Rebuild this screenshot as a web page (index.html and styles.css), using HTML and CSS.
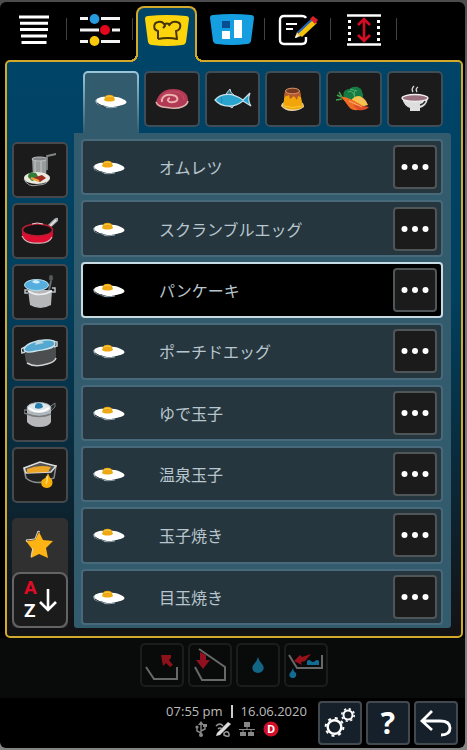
FILE: index.html
```html
<!DOCTYPE html>
<html lang="ja">
<head>
<meta charset="utf-8">
<meta name="viewport" content="width=device-width, initial-scale=1">
<title>玉子料理</title>
<link rel="stylesheet" href="styles.css">
</head>
<body>
<svg class="defs" aria-hidden="true">
  <symbol id="egg" viewBox="0 0 32 16">
    <path d="M1 9C0 5 7 3 13 4c6-1 14 0 18 4 2 3-3 4-8 5-5 2-12 1-15-1-4 0-7-1-7-3z" fill="#fff"/>
    <path d="M1 7c-1 3 3 5 7 6 3 2 9 2 14 1" fill="none" stroke="#8fa3ad" stroke-width="1.200"/>
    <path d="M2 10l5 3M7 13l4 2" stroke="#17252d" stroke-width=".8"/>
    <path d="M10 4c1-3 8-3 9 0l1 3c-2 2-9 2-11 0z" fill="#eda913"/>
    <path d="M11 4c2-1 5-1 7 0" stroke="#f9cf4f" fill="none"/>
  </symbol>
  <symbol id="dots" viewBox="0 0 28 8"><g fill="#fff"><circle cx="3.500" cy="4" r="3"/><circle cx="14" cy="4" r="3"/><circle cx="24.500" cy="4" r="3"/></g></symbol>
</svg>
<main class="device">
  <nav class="modes" aria-label="モード">
    <button class="mode" aria-label="リスト"><svg width="32" height="32" viewBox="0 0 32 32"><path d="M1 3h30M2 9.300h28M2 15.600h28M3 22h26M3.500 28.500h25" stroke="#fff" stroke-width="3"/></svg></button>
    <button class="mode" aria-label="設定値"><svg width="42" height="32" viewBox="0 0 42 32"><path d="M1 4.500h8M22 4.500h19M1 16h19M33 16h8M1 27.500h8M22 27.500h19" stroke="#f4f4f4" stroke-width="3"/><circle cx="15.500" cy="5" r="4.900" fill="#259be0"/><circle cx="26" cy="16" r="5" fill="#e3061c"/><circle cx="15.500" cy="27" r="4.900" fill="#f8c90b"/></svg></button>
    <button class="mode active" aria-label="調理" aria-pressed="true"><svg width="46" height="34" viewBox="0 0 46 34"><path d="M4 2Q23 0 42 2q3 0 3 3l-3 23q-1 3-4 3-15 2-30 0-3 0-4-3L1 5q0-3 3-3z" fill="#fbd40c"/><path d="M14 25v-8c-5-1-5-8 0-9 4-1 6 1 7 4l-2 2M25 12c1-3 4-5 8-4 5 1 4 8-1 9l1 8q-9-2-19 0M21 10q2-1 4 0" fill="none" stroke="#44330b" stroke-width="2" stroke-linejoin="round"/></svg></button>
    <button class="mode" aria-label="プログラム"><svg width="46" height="34" viewBox="0 0 46 34"><path d="M4 2Q23 0 42 2q3 0 3 3l-3 23q-1 3-4 3-15 2-30 0-3 0-4-3L1 5q0-3 3-3z" fill="#159fe1"/><path d="M13 8h8v7h-8z" fill="#064e91"/><path d="M13 18h8v8h-8zM25 7h8v18h-8z" fill="#fff"/></svg></button>
    <button class="mode" aria-label="編集"><svg width="40" height="32" viewBox="0 0 40 32"><path d="M28 23v3q0 4-4 4H6q-4 0-4-4V6q0-4 4-4h18q3 0 4 2" fill="none" stroke="#fff" stroke-width="2.400"/><path d="M8 10h11M8 15h7" stroke="#fff" stroke-width="2"/><path d="M17 24l2-6 4 4z" fill="#f6dba4"/><path d="M19 18L34 4l2 2-15 14z" fill="#2464b5"/><path d="M20 20L35 6l4 3-15 14z" fill="#f4c20d"/><path d="M32 5l3-3 5 4-3 4z" fill="#dc2027"/><path d="M17 24l1-3 2 2z" fill="#fff"/></svg></button>
    <button class="mode" aria-label="ラック"><svg width="34" height="32" viewBox="0 0 34 32"><path d="M0 1.500h34M0 30.500h34" stroke="#fff" stroke-width="2.600"/><path d="M2.500 6v21M31.500 6v21" stroke="#fff" stroke-width="3" stroke-dasharray="3 3"/><path d="M17 5v22M11 11l6-6 6 6M11 21l6 6 6-6" fill="none" stroke="#d50d22" stroke-width="2.600"/></svg></button>
  </nav>

  <section class="panel">
    <nav class="cats" aria-label="食材">
      <button class="tile cat current" aria-label="玉子料理" aria-pressed="true"><svg class="egg"><use href="#egg"/></svg></button>
      <button class="tile cat" aria-label="肉"><svg width="34" height="22" viewBox="0 0 34 22"><path d="M1 14C3 7 8 1 18 1c9 0 15 4 15 11 0 6-8 9-17 8C7 21 0 18 1 14z" fill="#b23a55"/><path d="M1 14c2 6 10 5 15 6 9 1 16-2 17-7" fill="none" stroke="#d9b2aa" stroke-width="1.500"/><path d="M7 14C6 8 12 6 17 7c7 1 7 7 1 7-5 1-7-3-3-4" fill="none" stroke="#edb0ae" stroke-width="2"/><path d="M5 12C8 5 13 3 20 4c6 0 9 4 9 8" fill="none" stroke="#c45267"/></svg></button>
      <button class="tile cat" aria-label="魚"><svg width="38" height="22" viewBox="0 0 38 22"><path d="M12 6q3-4 4-5 0 4 4 6M14 17l4 3 2-3" fill="#28738e" stroke="#d2dfe3"/><path d="M1 12C7 5 18 4 29 12l7-7q-3 7 1 13l-8-5C20 20 8 20 1 12z" fill="#28a4ce" stroke="#c7e0e7" stroke-width="1.200"/><path d="M7 9q2 3 0 6" fill="none" stroke="#1b87b0"/></svg></button>
      <button class="tile cat" aria-label="デザート"><svg width="26" height="26" viewBox="0 0 26 26"><path d="M1 20q1-4 4-4h16q3 1 3 5-5 4-12 4T1 20z" fill="#e7d3a7"/><path d="M5 6q7-5 15 0l3 15q-9 5-20 0z" fill="#f1a50a"/><path d="M5 5q7-5 15 0l1 6-3-1-1 4-3-4-4 3-1-4-5 2z" fill="#b55a2c"/><ellipse cx="12.500" cy="5" rx="7" ry="2.800" fill="#783923" stroke="#dd9467"/><path d="M4 20q8 3 18 0" fill="none" stroke="#ffcf31"/></svg></button>
      <button class="tile cat" aria-label="野菜"><svg width="36" height="26" viewBox="0 0 36 26"><path d="M8 12C6 5 10 3 14 3c3-4 12-2 12 3 4 6-3 9-8 9z" fill="#167b42"/><path d="M12 6q5-3 7 6M20 4q-3 2-1 8M14 3l7 2" stroke="#4eb369" fill="none"/><path d="M16 13q7-7 14 2l2 4q-9 3-16-1z" fill="#f4c34c"/><path d="M4 10q13 2 25 12-11 5-16-1Q9 15 4 10z" fill="#ef6d23"/><path d="M5 11l-4-2m5 4l-6 1m6-3l-3-5" stroke="#43a04b" stroke-width="1.500"/><path d="M17 19q8 0 16 2-4 4-11 3z" fill="#de4d27"/><path d="M13 15l13 6M22 13q5 0 9 5" stroke="#ffb07b" fill="none"/></svg></button>
      <button class="tile cat" aria-label="スープ"><svg width="28" height="28" viewBox="0 0 28 28"><path d="M12 7q-2-3 1-6m3 6q-2-3 1-5" stroke="#d5d5d5" stroke-width="1.400" fill="none"/><path d="M1 13q2 8 8 10v3h10v-3q7-2 8-10z" fill="#dedede"/><ellipse cx="14" cy="13" rx="13" ry="3.500" fill="#99727f" stroke="#eee" stroke-width="1.300"/><path d="M19 20q4-1 5-4" stroke="#333" stroke-width="1.500" fill="none"/></svg></button>
    </nav>

    <aside class="side">
      <button class="tile" aria-label="付け合わせ"><svg width="34" height="34" viewBox="0 0 34 34"><path d="M9 6h15l-1 17H10z" fill="#999c9c"/><path d="M12 7v13M18 7v14" stroke="#c4c7c6"/><ellipse cx="16.500" cy="6" rx="7.500" ry="2" fill="#828686" stroke="#c0c3c4"/><path d="M24 17V3l9-2" fill="none" stroke="#818686" stroke-width="1.800"/><ellipse cx="14" cy="25" rx="13" ry="6" fill="#e9e9df"/><path d="M1 26q4 9 14 6 8 0 11-5" fill="none" stroke="#a6aaa8"/><path d="M5 24q0-6 8-4l3 5-7 3z" fill="#327d38"/><path d="M10 25l9-3 4 3-6 4z" fill="#9e2b20"/><path d="M8 25l8 3" stroke="#f0a33b" stroke-width="2"/></svg></button>
      <button class="tile" aria-label="フライパン"><svg width="38" height="28" viewBox="0 0 38 28"><path d="M25 10l7-7q3-3 5-2v3l-10 9z" fill="#a8abad"/><path d="M28 10l7-7" stroke="#eee" stroke-width="1.200"/><path d="M1 14q-1 11 15 12 14 0 16-8V13z" fill="#e00d31"/><path d="M1 19q4 8 15 7 12 1 15-6" stroke="#d9b6b9" stroke-width="1.200" fill="none"/><ellipse cx="16.500" cy="13" rx="15" ry="6" fill="#151012" stroke="#b41e32" stroke-width="1.700"/><path d="M11 7q5-2 11 0" stroke="#f2cfd2" fill="none"/></svg></button>
      <button class="tile" aria-label="鍋"><svg width="32" height="36" viewBox="0 0 32 36"><path d="M4 16h24l-1 15q-11 6-21 0z" fill="#b5b7b9"/><path d="M4 17q11 7 24 0" fill="none" stroke="#eee" stroke-width="1.500"/><path d="M4 19H1v-3h3m24 2h3v-4h-3" fill="none" stroke="#bfc2c5" stroke-width="1.500"/><path d="M25 16l2-9" fill="none" stroke="#6b6f72" stroke-width="2"/><ellipse cx="27" cy="4" rx="2" ry="3" fill="#55595b"/><ellipse cx="12.500" cy="11" rx="12" ry="5.500" fill="#55aede" stroke="#b6e1f0"/><path d="M8 8q3-4 8 0-2 3-8 0z" fill="#d1eefb"/></svg></button>
      <button class="tile" aria-label="両手鍋"><svg width="38" height="28" viewBox="0 0 38 28"><path d="M3 11l2 12q5 4 18 3 10-1 12-6V7z" fill="#4b4d4e"/><path d="M4 13L1 14l-1-4 4-2M33 8l3-1V3l-4-1M6 24q8 5 20 1 8-2 9-6" fill="none" stroke="#ced2d4" stroke-width="1.500"/><path d="M3 10C5 5 14 2 24 1q10-1 10 4c-1 5-12 6-19 7-8 2-12 1-12-2z" fill="#55a9d1" stroke="#c8e6ef" stroke-width="1.300"/><path d="M15 3q2-4 6-1l2 2-9 2z" fill="#bdd6df"/></svg></button>
      <button class="tile" aria-label="片手鍋"><svg width="32" height="28" viewBox="0 0 32 28"><path d="M24 8l7-5v4l-7 7" fill="#292a2a" stroke="#777"/><path d="M3 9v13q4 5 12 5 10 0 12-5V9z" fill="#b7b8b9"/><path d="M3 14L0 13v-3h3m0 4q12 5 24 0" fill="none" stroke="#777b7d" stroke-width="1.400"/><ellipse cx="15" cy="8" rx="12" ry="5.500" fill="#e1e7e9" stroke="#9caeb7"/><path d="M5 8q9 7 20 0" fill="none" stroke="#fff" stroke-width="1.500"/><path d="M11 6q1-5 7-2l1 3q-3 3-8 1z" fill="#287daf"/></svg></button>
      <button class="tile" aria-label="揚げ物"><svg width="34" height="28" viewBox="0 0 34 28"><path d="M1 8l2 9q7 6 17 4l11-4 2-12z" fill="#202123" stroke="#8b8e90" stroke-width="1.500"/><path d="M1 7L17 1l16 4-5 6-25 1z" fill="#555" stroke="#ddd" stroke-width="1.500"/><path d="M4 8q12-5 24-2l-3 5-21 1z" fill="#eca526"/><path d="M25 12q1 4 4 7c2 5-2 8-5 8-5 0-7-4-5-8 4-2 5-4 6-7z" fill="#f7af0b"/><path d="M24 15q1 4-1 8" stroke="#ffe079" stroke-width="1.400" fill="none"/></svg></button>
      <div class="sorting">
        <button class="tile star" aria-label="お気に入り"><svg width="30" height="30" viewBox="0 0 30 30"><path d="M14 2l4 8 10 1-7 7 2 10-9-4-8 4 1-9-6-8 9-1z" fill="#fdb313"/><path d="M2 12l-1-2 9-1 3-8 2 1M6 27l2-9" fill="none" stroke="#e8d6ce"/></svg></button>
        <button class="tile sort" aria-label="AからZ"><svg width="36" height="52" viewBox="0 0 36 52"><text x="2" y="20" fill="#e20b26" class="letter">A</text><text x="2" y="43" fill="#fff" class="letter">Z</text><path d="M26 15v20M18 28l8 8 8-8" fill="none" stroke="#fff" stroke-width="2.600"/></svg></button>
      </div>
    </aside>

    <ul class="list">
      <li class="row"><button class="pick"><svg class="egg"><use href="#egg"/></svg><span>オムレツ</span></button><button class="tile more" aria-label="その他"><svg class="dots"><use href="#dots"/></svg></button></li>
      <li class="row"><button class="pick"><svg class="egg"><use href="#egg"/></svg><span>スクランブルエッグ</span></button><button class="tile more" aria-label="その他"><svg class="dots"><use href="#dots"/></svg></button></li>
      <li class="row selected"><button class="pick"><svg class="egg"><use href="#egg"/></svg><span>パンケーキ</span></button><button class="tile more" aria-label="その他"><svg class="dots"><use href="#dots"/></svg></button></li>
      <li class="row"><button class="pick"><svg class="egg"><use href="#egg"/></svg><span>ポーチドエッグ</span></button><button class="tile more" aria-label="その他"><svg class="dots"><use href="#dots"/></svg></button></li>
      <li class="row"><button class="pick"><svg class="egg"><use href="#egg"/></svg><span>ゆで玉子</span></button><button class="tile more" aria-label="その他"><svg class="dots"><use href="#dots"/></svg></button></li>
      <li class="row"><button class="pick"><svg class="egg"><use href="#egg"/></svg><span>温泉玉子</span></button><button class="tile more" aria-label="その他"><svg class="dots"><use href="#dots"/></svg></button></li>
      <li class="row"><button class="pick"><svg class="egg"><use href="#egg"/></svg><span>玉子焼き</span></button><button class="tile more" aria-label="その他"><svg class="dots"><use href="#dots"/></svg></button></li>
      <li class="row"><button class="pick"><svg class="egg"><use href="#egg"/></svg><span>目玉焼き</span></button><button class="tile more" aria-label="その他"><svg class="dots"><use href="#dots"/></svg></button></li>
    </ul>
  </section>

  <div class="actions">
    <button class="tile action" aria-label="パンを上げる"><svg width="36" height="32" viewBox="0 0 36 32"><path d="M2 18l8 12h23V18" fill="none" stroke="#686868" stroke-width="2"/><path d="M17 6h10v3l-2 2 4 5-3 2-4-4-3 3z" fill="#8d1118"/></svg></button>
    <button class="tile action" aria-label="ふたを閉める"><svg width="36" height="36" viewBox="0 0 36 36"><path d="M3 20l7 13h23V20L7 2" fill="none" stroke="#686868" stroke-width="2"/><path d="M8 5l6 3v5h4l-7 9-7-9h4z" fill="#901020"/></svg></button>
    <button class="tile action" aria-label="給水"><svg width="14" height="18" viewBox="0 0 14 18"><path d="M7 1q1 4 4 7c4 5 0 9-4 9s-8-4-4-9q3-3 4-7z" fill="#126585"/></svg></button>
    <button class="tile action" aria-label="排水"><svg width="36" height="28" viewBox="0 0 36 28"><path d="M1 4l8 13h25V4" fill="none" stroke="#686868" stroke-width="2"/><path d="M6 10l6-6 2 2 9-3-6 7-4 1 1 3z" fill="#99121b"/><path d="M19 10q2-2 4 0t4 0 4 0v4H19z" fill="#126b91"/><path d="M5 17q0 3 3 5c1 3-1 5-3 5s-5-2-3-5q2-2 3-5z" fill="#126b91"/></svg></button>
  </div>

  <footer class="foot">
    <div class="status">
      <p class="clock"><time>07:55 pm</time><i class="bar"></i><time datetime="2020-06-16">16.06.2020</time></p>
      <div class="signals">
        <svg width="12" height="16" viewBox="0 0 12 16"><path d="M6 15V3M6 12L2 10V6m4 4l4-2V4" fill="none" stroke="#888" stroke-width="1.400"/><path d="M3 4l3-4 3 4zM8 3h4v3H8z" fill="#888"/><circle cx="2" cy="6" r="1.600" fill="#888"/><circle cx="6" cy="14" r="2" fill="#888"/></svg>
        <svg width="16" height="16" viewBox="0 0 16 16"><path d="M2 12L13 1l3 2L5 14l-4 1z" fill="#ddd"/><path d="M1 5q4-4 7 0M3 8q2-2 4 0M9 12q4-3 5 1t-5 1z" fill="none" stroke="#999" stroke-width="1.500"/></svg>
        <svg width="16" height="16" viewBox="0 0 16 16"><path d="M5 1h6v5H5zM1 11h6v4H1zM9 11h6v4H9z" fill="#888"/><path d="M8 6v3M0 8.500h16M4 8v4M12 8v4" stroke="#888"/></svg>
        <svg width="16" height="16" viewBox="0 0 16 16"><circle cx="8" cy="8" r="7.500" fill="#d20f2b"/><text x="8" y="12" text-anchor="middle" class="badge">D</text></svg>
      </div>
    </div>
    <div class="tools">
      <button class="tile tool" aria-label="設定"><svg width="32" height="32" viewBox="0 0 32 32"><g fill="none" stroke="#fff"><circle cx="10.500" cy="20" r="6.800" stroke-width="2.400"/><circle cx="10.500" cy="20" r="8.900" stroke-width="2" stroke-dasharray="3 3.990"/><circle cx="24" cy="8" r="4.500" stroke-width="2"/><circle cx="24" cy="8" r="6.200" stroke-width="1.600" stroke-dasharray="2.200 2.670"/></g></svg></button>
      <button class="tile tool help" aria-label="ヘルプ">?</button>
      <button class="tile tool" aria-label="戻る"><svg width="32" height="28" viewBox="0 0 32 28"><path d="M12 2L2 12l10 9M3 12h17q10 0 10 7 0 7-9 7" fill="none" stroke="#fff" stroke-width="2.800"/></svg></button>
    </div>
  </footer>
</main>
</body>
</html>
```
FILE: styles.css
```css
* { box-sizing: border-box; }

:root {
  --gold: #d3a92c;
  --teal: #004468;
  --steel: #335b6e;
  --ink: #1b1b1c;
}

body {
  margin: 0;
  padding: 2px 2px 2px 0;
  background: linear-gradient(#4c4c4c, #6e6e6e 20%, #858585);
  font-family: "Open Sans", "Noto Sans CJK JP", sans-serif;
  color: #b9c6cd;
}

button {
  margin: 0;
  padding: 0;
  border: 0;
  background: none;
  color: inherit;
  font: inherit;
  cursor: pointer;
}

svg { display: block; flex: none; }
.defs { position: absolute; width: 0; height: 0; }
.egg { width: 32px; height: 16px; }
.dots { width: 28px; height: 8px; }

.device {
  display: flex;
  flex-direction: column;
  min-height: calc(100vh - 4px);
  background: #000;
  border-radius: 6px;
}

/* Mode bar */
.modes {
  display: grid;
  grid-template-columns: repeat(6, minmax(0, 66px)) 1fr;
  padding: 4px 0 0 1px;
}

.mode {
  position: relative;
  display: flex;
  align-items: center;
  justify-content: center;
  height: 54px;
  padding-bottom: 6px;
}

.mode:not(.active)::after {
  content: "";
  position: absolute;
  right: 0;
  top: 12px;
  width: 1px;
  height: 22px;
  background: #424242;
}

.mode.active {
  z-index: 1;
  height: 56px;
  margin: 0 2px -2px 3px;
  padding-bottom: 8px;
  border: 2px solid var(--gold);
  border-bottom: 0;
  border-radius: 8px 8px 0 0;
  background: var(--teal);
}

.mode.active::before,
.mode.active::after {
  content: "";
  position: absolute;
  bottom: 0;
  width: 8px;
  height: 8px;
}

.mode.active::before {
  right: 100%;
  background: radial-gradient(circle at 0 0, #000 6px, var(--gold) 6px 8px, var(--teal) 8px);
}

.mode.active::after {
  left: 100%;
  background: radial-gradient(circle at 100% 0, #000 6px, var(--gold) 6px 8px, var(--teal) 8px);
}

/* Main panel */
.panel {
  flex: 1;
  display: grid;
  grid-template-columns: 56px minmax(0, 1fr);
  grid-template-rows: auto 1fr;
  column-gap: 6px;
  margin: 0 2px 0 5px;
  padding: 9px 10px 8px 5px;
  border: 2px solid var(--gold);
  border-radius: 5px;
  background: linear-gradient(var(--teal) 0%, #00405f 40%, #0a2a3b 70%, #131316 98%);
}

.tile {
  display: flex;
  align-items: center;
  justify-content: center;
  height: 56px;
  border: 2px solid #45494c;
  border-radius: 5px;
  background: var(--ink);
}

.cats {
  grid-column: 2;
  display: grid;
  grid-template-columns: repeat(6, minmax(0, 1fr));
  gap: 5px;
  padding: 0 8px 6px 9px;
}

.cat { border-color: #3d4e59; }

.cat.current {
  height: 62px;
  margin-bottom: -6px;
  padding-bottom: 4px;
  border: 2px solid transparent;
  border-bottom: 0;
  border-radius: 5px 5px 0 0;
  background:
    linear-gradient(var(--steel), var(--steel)) padding-box,
    linear-gradient(#9cc6da, var(--steel)) border-box;
}

.side {
  display: flex;
  flex-direction: column;
  gap: 5px;
  padding-top: 9px;
}

.sorting {
  display: grid;
  margin-top: auto;
  border-radius: 5px;
  background: #303031;
}

.star { height: 54px; border: 0; background: none; }
.sort { border-color: #646464; border-radius: 8px; }
.letter { font: bold 19px Roboto, sans-serif; }

.list {
  display: grid;
  grid-auto-rows: minmax(52px, 1fr);
  gap: 5px;
  margin: 0;
  padding: 6px 8px 3px 7px;
  border-radius: 0 3px 3px 3px;
  background: var(--steel);
  list-style: none;
}

.row {
  display: flex;
  align-items: center;
  padding-right: 4px;
  border: 2px solid #48697a;
  border-radius: 4px;
  background: #26363f;
}

.row.selected { border-color: #c8dbe3; background: #000; }

.pick {
  flex: 1;
  align-self: stretch;
  display: flex;
  align-items: center;
  gap: 34px;
  padding-left: 10px;
  font: 16px/24px "Noto Sans CJK JP", sans-serif;
  text-align: left;
}

.more { width: 44px; height: 44px; border-color: #505558; border-radius: 4px; }

/* Pan actions */
.actions {
  display: flex;
  justify-content: center;
  gap: 4px;
  padding: 5px 0 11px 2px;
  background: #090a0a;
}

.action {
  width: 44px;
  height: 44px;
  border-color: #1b1c1c;
  background: #090a0a;
}

/* Footer */
.foot {
  display: grid;
  grid-template-columns: 1fr auto 1fr;
  padding: 3px 7px 3px 15px;
}

.status { grid-column: 2; }

.clock {
  display: flex;
  align-items: center;
  gap: 8px;
  margin: 0;
  font-size: 13px;
  line-height: 20px;
  color: #bcbcbc;
}

.bar { width: 2px; height: 13px; background: #ccc; }

.signals {
  display: flex;
  justify-content: center;
  gap: 8px;
}

.badge { font: bold 11px "Open Sans", sans-serif; fill: #fff; }

.tools {
  display: flex;
  justify-content: flex-end;
  gap: 4px;
}

.tool {
  width: 44px;
  height: 44px;
  border-color: #424a50;
  border-radius: 4px;
  background: #15202a;
}

.help { color: #fff; font: bold 30px/40px "Open Sans", sans-serif; }
```
